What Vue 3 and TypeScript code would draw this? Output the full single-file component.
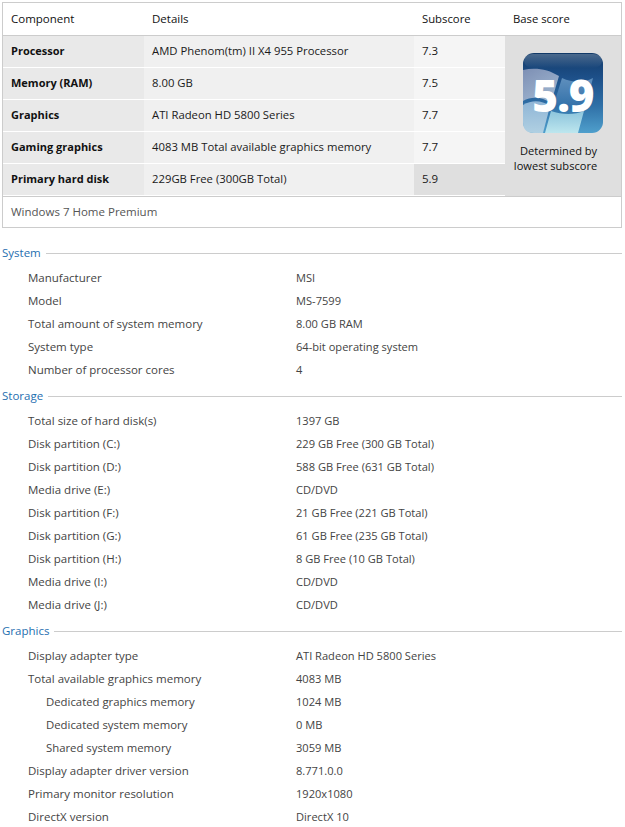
<script setup lang="ts">
interface ScoreRow { name: string; details: string; score: string }
interface InfoRow { label: string; value: string; indent?: boolean }
interface Section { title: string; rows: InfoRow[] }

const scores: ScoreRow[] = [
  { name: 'Processor', details: 'AMD Phenom(tm) II X4 955 Processor', score: '7.3' },
  { name: 'Memory (RAM)', details: '8.00 GB', score: '7.5' },
  { name: 'Graphics', details: 'ATI Radeon HD 5800 Series', score: '7.7' },
  { name: 'Gaming graphics', details: '4083 MB Total available graphics memory', score: '7.7' },
  { name: 'Primary hard disk', details: '229GB Free (300GB Total)', score: '5.9' },
]

const sections: Section[] = [
  {
    title: 'System',
    rows: [
      { label: 'Manufacturer', value: 'MSI' },
      { label: 'Model', value: 'MS-7599' },
      { label: 'Total amount of system memory', value: '8.00 GB RAM' },
      { label: 'System type', value: '64-bit operating system' },
      { label: 'Number of processor cores', value: '4' },
    ],
  },
  {
    title: 'Storage',
    rows: [
      { label: 'Total size of hard disk(s)', value: '1397 GB' },
      { label: 'Disk partition (C:)', value: '229 GB Free (300 GB Total)' },
      { label: 'Disk partition (D:)', value: '588 GB Free (631 GB Total)' },
      { label: 'Media drive (E:)', value: 'CD/DVD' },
      { label: 'Disk partition (F:)', value: '21 GB Free (221 GB Total)' },
      { label: 'Disk partition (G:)', value: '61 GB Free (235 GB Total)' },
      { label: 'Disk partition (H:)', value: '8 GB Free (10 GB Total)' },
      { label: 'Media drive (I:)', value: 'CD/DVD' },
      { label: 'Media drive (J:)', value: 'CD/DVD' },
    ],
  },
  {
    title: 'Graphics',
    rows: [
      { label: 'Display adapter type', value: 'ATI Radeon HD 5800 Series' },
      { label: 'Total available graphics memory', value: '4083 MB' },
      { label: 'Dedicated graphics memory', value: '1024 MB', indent: true },
      { label: 'Dedicated system memory', value: '0 MB', indent: true },
      { label: 'Shared system memory', value: '3059 MB', indent: true },
      { label: 'Display adapter driver version', value: '8.771.0.0' },
      { label: 'Primary monitor resolution', value: '1920x1080' },
      { label: 'DirectX version', value: 'DirectX 10' },
    ],
  },
]
</script>

<template>
  <div class="page">
    <div class="card">
      <div class="head">
        <div class="h1">Component</div>
        <div class="h2">Details</div>
        <div class="h3">Subscore</div>
        <div class="h4">Base score</div>
      </div>
      <div class="body">
        <div class="rows">
          <div v-for="(r, i) in scores" :key="r.name" class="row">
            <div class="name">{{ r.name }}</div>
            <div class="details">{{ r.details }}</div>
            <div class="score" :class="{ lowest: i === scores.length - 1 }">{{ r.score }}</div>
          </div>
        </div>
        <div class="base">
          <div class="badge">
            <svg class="badge-art" viewBox="0 0 80 80" width="80" height="80" aria-hidden="true">
              <defs>
                <linearGradient id="bg" x1="0" y1="0" x2="0" y2="1">
                  <stop offset="0" stop-color="#123a68" />
                  <stop offset="0.3" stop-color="#1d4f88" />
                  <stop offset="0.65" stop-color="#2f6fa6" />
                  <stop offset="1" stop-color="#4f9fcc" />
                </linearGradient>
                <linearGradient id="gl" x1="0" y1="0" x2="0" y2="1">
                  <stop offset="0" stop-color="#fff" stop-opacity="0.24" />
                  <stop offset="1" stop-color="#fff" stop-opacity="0" />
                </linearGradient>
                <linearGradient id="fl" x1="0" y1="0" x2="0.6" y2="1">
                  <stop offset="0" stop-color="#7d8fb4" />
                  <stop offset="1" stop-color="#9fb6d0" />
                </linearGradient>
                <linearGradient id="fd" x1="0" y1="0" x2="0" y2="1">
                  <stop offset="0" stop-color="#8fb5d6" />
                  <stop offset="1" stop-color="#b0d0e2" />
                </linearGradient>
                <linearGradient id="fr" x1="0" y1="0" x2="0" y2="1">
                  <stop offset="0" stop-color="#5f8fbd" />
                  <stop offset="1" stop-color="#2f6fa8" />
                </linearGradient>
                <linearGradient id="fb" x1="0" y1="0" x2="0" y2="1">
                  <stop offset="0" stop-color="#8cc4dc" />
                  <stop offset="1" stop-color="#bde6ee" />
                </linearGradient>
              </defs>
              <rect width="80" height="80" rx="11" fill="url(#bg)" />
              <rect x="1" y="1" width="78" height="14" rx="9" fill="url(#gl)" />
              <path d="M0 17 C12 14 25 16 36 23 L28 50 C19 44 9 43 0 48 Z" fill="url(#fl)" />
              <path d="M0 52 C9 47 18 47 27 53 L20 80 L11 80 Q0 80 0 69 Z" fill="url(#fd)" />
              <path d="M39 25 C50 30 60 30 70 25 L63 53 C53 57 42 56 31 51 Z" fill="url(#fr)" />
              <path d="M28 58 C39 62 52 62 61 58 L55 80 L22 80 Z" fill="url(#fb)" />
            </svg>
            <span class="badge-num">5.9</span>
          </div>
          <div class="base-note">Determined by<br />lowest subscore</div>
        </div>
      </div>
      <div class="edition">Windows 7 Home Premium</div>
    </div>

    <section v-for="s in sections" :key="s.title" class="section">
      <div class="sec-title">
        <span>{{ s.title }}</span>
        <i class="rule"></i>
      </div>
      <div class="list">
        <div v-for="r in s.rows" :key="r.label" class="info">
          <div class="label" :class="{ indent: r.indent }">{{ r.label }}</div>
          <div class="value">{{ r.value }}</div>
        </div>
      </div>
    </section>
  </div>
</template>

<style>
html, body { margin: 0; background: #fff; }
</style>

<style scoped>
.page {
  width: 625px;
  height: 827px;
  overflow: hidden;
  box-sizing: border-box;
  padding: 2px 3px 0 2px;
  font-family: "Open Sans", "Noto Sans", "Liberation Sans", sans-serif;
  font-size: 11.5px;
  color: #1a1a1a;
}
.card {
  border: 1px solid #ccc;
  height: 226px;
  box-sizing: border-box;
  background: #fff;
}
.head {
  display: grid;
  grid-template-columns: 141px 270px 91px 1fr;
  height: 32px;
  align-items: center;
  border-bottom: 1px solid #ccc;
  color: #111;
}
.h1, .h2, .h3, .h4 { padding-left: 8px; padding-bottom: 1px; }
.h3, .h4 { font-size: 11.3px; }
.body { display: flex; height: 160px; }
.rows { width: 502px; display: flex; flex-direction: column; }
.row {
  display: grid;
  grid-template-columns: 141px 270px 91px;
  height: 32px;
}
.row > div {
  display: flex;
  align-items: center;
  padding-left: 8px;
  height: 31px;
  padding-bottom: 3px;
  box-sizing: border-box;
}
.name { background: #e9e9e9; font-weight: 700; font-size: 11px; color: #111; }
.details { background: #f0f0f0; font-size: 11.3px; }
.score { background: #f5f5f5; }
.score.lowest { background: #dfdfdf; }
.base {
  flex: 1;
  background: #dfdfdf;
  display: flex;
  flex-direction: column;
  align-items: center;
  padding-top: 17px;
  box-sizing: border-box;
}
.badge { position: relative; width: 80px; height: 80px; }
.badge-art { display: block; }
.badge-num {
  position: absolute;
  left: 0;
  right: 0;
  top: 12px;
  text-align: center;
  color: #fff;
  font-family: "Open Sans", sans-serif;
  font-weight: 800;
  font-size: 44px;
  line-height: 60px;
  letter-spacing: -1px;
}
.base-note {
  margin-top: 10px;
  margin-right: 15px;
  text-align: right;
  line-height: 15px;
  font-size: 11.1px;
  color: #111;
}
.edition {
  height: 31px;
  line-height: 29px;
  padding-left: 8px;
  border-top: 1px solid #ccc;
  color: #555;
}
.section { margin-bottom: 4px; }
.section:first-of-type { margin-top: 15px; }
.sec-title {
  display: flex;
  align-items: center;
  gap: 5px;
  height: 18px;
  color: #1f6fb0;
}
.rule { flex: 1; height: 1px; background: #ccc; margin-top: 3px; }
.list { padding-top: 6px; }
.info {
  display: grid;
  grid-template-columns: 294px 1fr;
  height: 23px;
  line-height: 21px;
  color: #444;
}
.label { padding-left: 26px; }
.label.indent { padding-left: 44px; font-size: 11.35px; }
.value { font-size: 11.1px; }
</style>
